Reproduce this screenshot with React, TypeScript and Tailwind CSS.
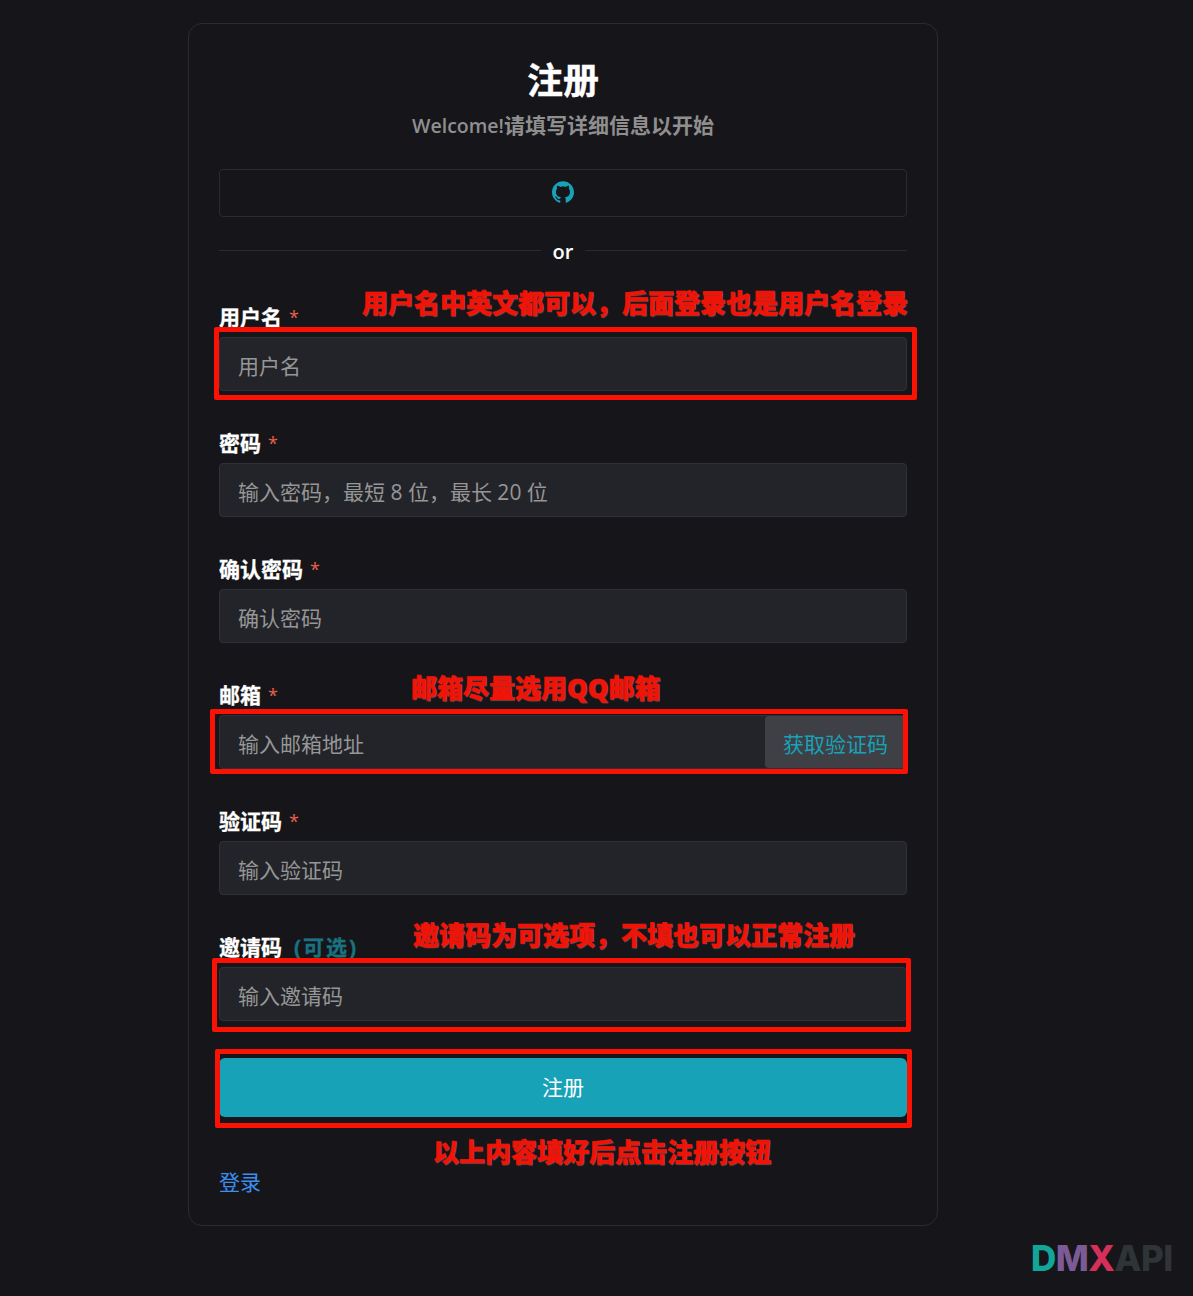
import { SiGithub } from 'react-icons/si'

const CJK = '"Open Sans", "Noto Sans CJK SC", sans-serif'

const FIELDS = [
  { label: '用户名', placeholder: '用户名', required: true },
  { label: '密码', placeholder: '输入密码，最短 8 位，最长 20 位', required: true },
  { label: '确认密码', placeholder: '确认密码', required: true },
  { label: '邮箱', placeholder: '输入邮箱地址', required: true, action: '获取验证码' },
  { label: '验证码', placeholder: '输入验证码', required: true },
  { label: '邀请码', placeholder: '输入邀请码', required: false },
]

const NOTES = [
  { text: '用户名中英文都可以，后面登录也是用户名登录', cls: 'left-[362px] top-[285px]' },
  { text: '邮箱尽量选用QQ邮箱', cls: 'left-[411px] top-[670px]' },
  { text: '邀请码为可选项，不填也可以正常注册', cls: 'left-[413px] top-[917px]' },
  { text: '以上内容填好后点击注册按钮', cls: 'left-[433px] top-[1134px]' },
]

const BOXES = [
  'left-[214px] top-[327px] w-[703px] h-[73px]',
  'left-[210px] top-[709px] w-[698px] h-[65px]',
  'left-[212px] top-[958px] w-[699px] h-[74px]',
  'left-[215px] top-[1049px] w-[697px] h-[79px]',
]

function Field({ label, placeholder, required, action }: (typeof FIELDS)[number]) {
  return (
    <div className="mb-[32px]">
      <div className="flex h-[40px] items-center text-[21px] leading-none font-bold text-white [-webkit-text-stroke:0.3px_#ffffff]">
        {label}
        {required ? (
          <span className="ml-[7px] text-[18px] font-normal text-[#e8604c] [-webkit-text-stroke:0]">*</span>
        ) : (
          <span className="ml-[12px] tracking-[2px] text-[#1a7280] [-webkit-text-stroke:0.3px_#1a7280]">(可选)</span>
        )}
      </div>
      <div className="flex h-[54px] overflow-hidden rounded-[4px] border border-[#303136] bg-[#232429]">
        <input
          readOnly
          placeholder={placeholder}
          className="min-w-0 flex-1 bg-transparent pt-[5px] pl-[18px] text-[21px] text-white outline-none placeholder:text-[#969696]"
        />
        {action && (
          <button className="w-[141px] shrink-0 rounded-l-[4px] bg-[#3f4045] pt-[5px] text-[21px] text-[#17a2b8]">{action}</button>
        )}
      </div>
    </div>
  )
}

export default function App() {
  return (
    <div className="relative h-[1296px] overflow-hidden bg-[#16161a] pt-[23px] pl-[188px]" style={{ fontFamily: CJK }}>
      <div className="w-[750px] rounded-[14px] border border-[#2a2a2f] px-[30px] pt-[32px] pb-[28px]">
        <h1 className="h-[50px] text-center text-[36px] leading-[50px] font-bold text-white [-webkit-text-stroke:0.4px_#ffffff]">注册</h1>
        <p className="h-[40px] -translate-y-[1px] text-center text-[21px] leading-[40px] font-bold text-[#8f8f8f]">
          <span className="text-[19.5px] font-semibold">Welcome!</span>请填写详细信息以开始
        </p>

        <button className="mt-[23px] flex h-[48px] w-full items-center justify-center rounded-[4px] border border-[#2a2a2f] pb-[2px]">
          <SiGithub size={22} className="text-[#17a2b8]" />
        </button>

        <div className="mt-[22px] mb-[34px] flex h-[24px] items-center gap-[12px]">
          <div className="h-px flex-1 -translate-y-[1px] bg-[#2a2a2f]" />
          <span className="translate-y-[1px] text-[20px] leading-none font-semibold text-white">or</span>
          <div className="h-px flex-1 -translate-y-[1px] bg-[#2a2a2f]" />
        </div>

        {FIELDS.map((f) => (
          <Field key={f.label} {...f} />
        ))}

        <button className="mt-[5px] h-[59px] w-full rounded-[6px] bg-[#17a2b8] text-[21px] text-white">注册</button>

        <div className="mt-[50px] h-[30px] text-[21px] leading-[30px] text-[#3b8ff0]">登录</div>
      </div>

      {BOXES.map((cls) => (
        <div key={cls} className={`absolute rounded-[2px] border-[5px] border-[#fb1204] ${cls}`} />
      ))}
      {NOTES.map((n) => (
        <div
          key={n.text}
          className={`absolute text-[26px] leading-[36px] font-black whitespace-nowrap text-[#f01408] [-webkit-text-stroke:0.6px_#f01408] [text-shadow:1px_1px_1px_#4a4a4a] ${n.cls}`}
        >
          {n.text}
        </div>
      ))}

      <div className="absolute top-[1236px] left-[1031px] flex text-[35px] leading-[44px] font-extrabold tracking-[-0.5px]" style={{ fontFamily: 'Inter, sans-serif' }}>
        <span className="text-[#12a59a]">D</span>
        <span className="text-[#7b5a96]">M</span>
        <span className="text-[#d6305a]">X</span>
        <span className="text-[#2f3436]">API</span>
      </div>
    </div>
  )
}
